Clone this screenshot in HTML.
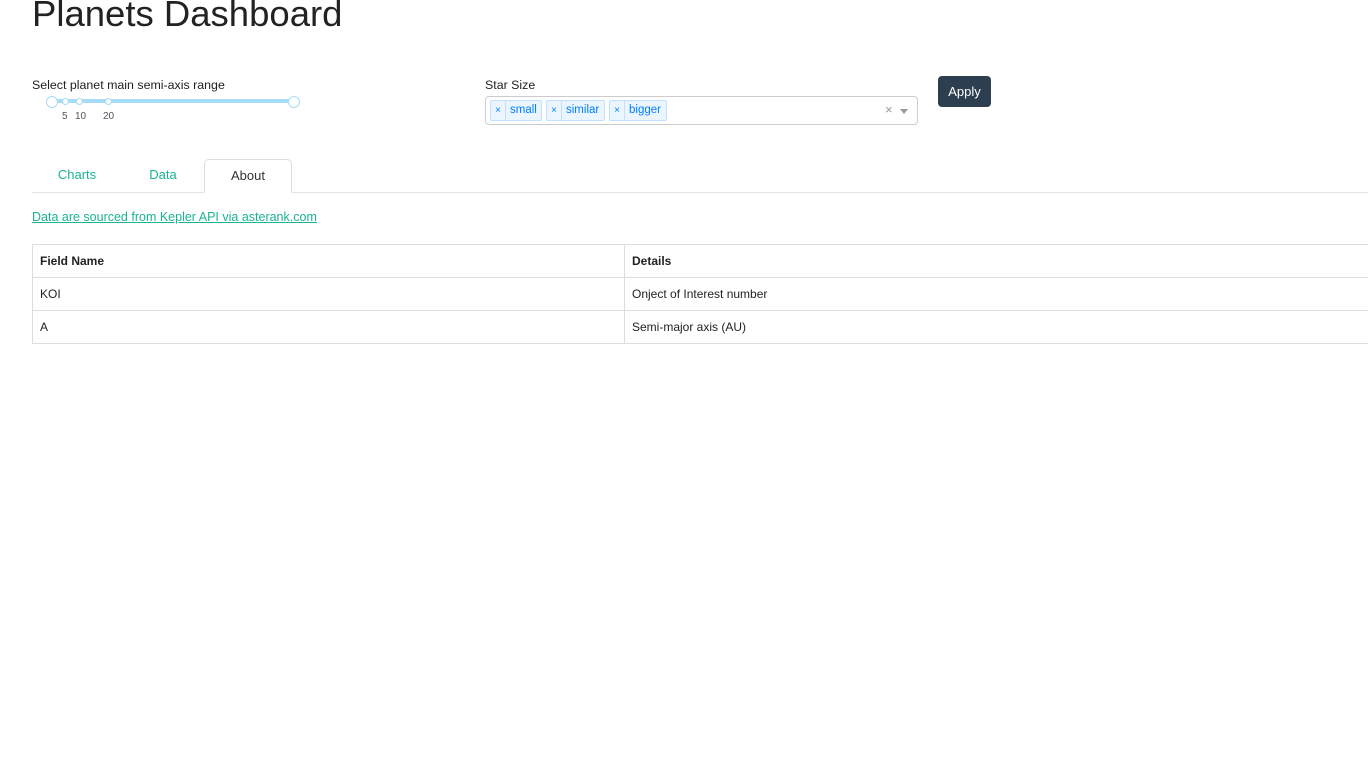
<!DOCTYPE html>
<html><head><meta charset="utf-8"><style>
body{margin:0;width:1368px;height:764px;background:#fff;font-family:"Liberation Sans",sans-serif;color:#222;position:relative;overflow:hidden}
.a{position:absolute}
h1{position:absolute;left:32px;top:-7px;margin:0;font-size:36.5px;font-weight:normal;color:#222}
.lbl{font-size:12.4px;color:#222}
.tag{position:absolute;top:100px;height:21px;border:1px solid #c2e0ff;background:#ebf5ff;border-radius:2px;font-size:11.5px;color:#007eff;line-height:19px;box-sizing:border-box;white-space:nowrap}
.tag .x{display:inline-block;width:14px;text-align:center;border-right:1px solid #c2e0ff;font-size:10px}
.tag .t{padding:0 4px}
.tab{position:absolute;top:159px;height:34px;line-height:32px;font-size:13px;color:#1ab394;text-align:center;box-sizing:border-box}
table{position:absolute;left:32px;top:244px;width:1340px;border-collapse:collapse;font-size:12px}
td{border:1px solid #ddd;height:33px;padding:0 7px;box-sizing:border-box}
</style></head><body>
<h1>Planets Dashboard</h1>
<div class="a lbl" style="left:32px;top:78px">Select planet main semi-axis range</div>
<div class="a" style="left:52px;top:99px;width:242px;height:4px;background:#a6dcf5;border-radius:2px"></div>
<div class="a" style="left:46px;top:96px;width:10px;height:10px;border:1px solid #a6dcf5;border-radius:50%;background:#fff"></div>
<div class="a" style="left:288px;top:96px;width:10px;height:10px;border:1px solid #a6dcf5;border-radius:50%;background:#fff"></div>
<div class="a" style="left:62px;top:98px;width:5px;height:5px;border:1px solid #a6dcf5;border-radius:50%;background:#fff"></div>
<div class="a" style="left:76px;top:98px;width:5px;height:5px;border:1px solid #a6dcf5;border-radius:50%;background:#fff"></div>
<div class="a" style="left:105px;top:98px;width:5px;height:5px;border:1px solid #a6dcf5;border-radius:50%;background:#fff"></div>
<div class="a" style="left:62px;top:111px;font-size:10px;color:#555">5</div>
<div class="a" style="left:75px;top:111px;font-size:10px;color:#555">10</div>
<div class="a" style="left:103px;top:111px;font-size:10px;color:#555">20</div>
<div class="a lbl" style="left:485px;top:78px">Star Size</div>
<div class="a" style="left:485px;top:96px;width:433px;height:29px;border:1px solid #ccc;border-radius:4px;box-sizing:border-box"></div>
<div class="tag" style="left:490px;width:52px"><span class="x">×</span><span class="t">small</span></div>
<div class="tag" style="left:546px;width:59px"><span class="x">×</span><span class="t">similar</span></div>
<div class="tag" style="left:609px;width:58px"><span class="x">×</span><span class="t">bigger</span></div>
<div class="a" style="left:885px;top:102px;font-size:13px;color:#999">×</div>
<div class="a" style="left:900px;top:109px;border:4px solid transparent;border-top:5px solid #999;border-bottom:0"></div>
<div class="a" style="left:938px;top:76px;width:53px;height:31px;background:#2c3e50;border-radius:4px;color:#fff;font-size:13px;line-height:31px;text-align:center">Apply</div>
<div class="a" style="left:32px;top:192px;width:1336px;height:1px;background:#e5e5e5"></div>
<div class="tab" style="left:32px;width:90px">Charts</div>
<div class="tab" style="left:122px;width:82px">Data</div>
<div class="tab" style="left:204px;width:88px;border:1px solid #ddd;border-bottom:1px solid #fff;border-radius:5px 5px 0 0;background:#fff;color:#333">About</div>
<div class="a" style="left:32px;top:210px;font-size:12.5px;color:#1ab394;text-decoration:underline">Data are sourced from Kepler API via asterank.com</div>
<table>
<tr><td style="width:592px;font-weight:bold">Field Name</td><td style="font-weight:bold">Details</td></tr>
<tr><td>KOI</td><td>Onject of Interest number</td></tr>
<tr><td>A</td><td>Semi-major axis (AU)</td></tr>
</table>
</body></html>
